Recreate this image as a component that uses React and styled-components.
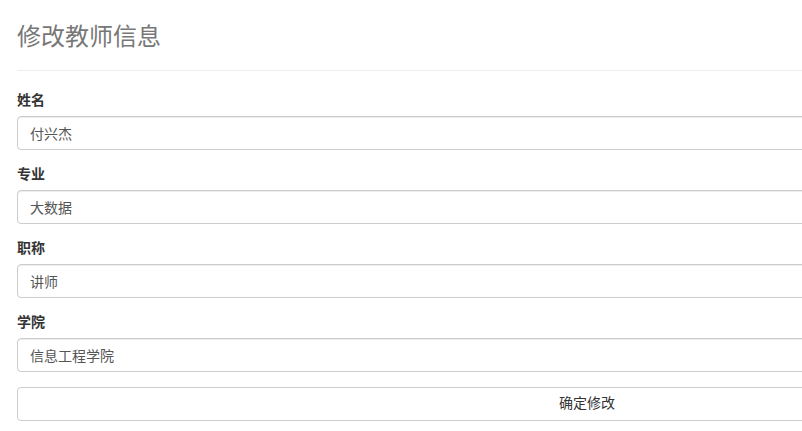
import React from 'react';
import styled, { createGlobalStyle } from 'styled-components';

const GlobalStyle = createGlobalStyle`
    html, body {
        margin: 0;
        padding: 0;
        overflow: hidden;
        background: #fff;
    }
    body {
        font-family: "Liberation Sans", "Noto Sans CJK SC", sans-serif;
        font-size: 14px;
        line-height: 1.42857;
        color: #333;
    }
`;

const Container = styled.div`
    width: 1140px;
    padding: 0 17px;
`;

const PageHeader = styled.div`
    padding: 24px 0 20px;
    margin-bottom: 20px;
    border-bottom: 1px solid #eee;

    h3 {
        margin: 0;
        font-size: 24px;
        font-weight: 400;
        line-height: 1.1;
        color: #777;
    }
`;

const FormGroup = styled.div`
    margin-bottom: 15px;
`;

const Label = styled.label`
    display: block;
    margin-bottom: 5px;
    font-weight: 700;
    color: #333;
`;

const Input = styled.input`
    display: block;
    box-sizing: border-box;
    width: 100%;
    height: 34px;
    padding: 6px 12px;
    font-family: inherit;
    font-size: 14px;
    line-height: 1.42857;
    color: #555;
    background: #fff;
    border: 1px solid #ccc;
    border-radius: 4px;
    box-shadow: inset 0 1px 1px rgba(0, 0, 0, 0.075);
    outline: none;
`;

const SubmitButton = styled.button`
    display: block;
    box-sizing: border-box;
    width: 100%;
    height: 34px;
    padding: 6px 12px;
    font-family: inherit;
    font-size: 14px;
    line-height: 1.42857;
    color: #333;
    background: #fff;
    border: 1px solid #ccc;
    border-radius: 4px;
    cursor: pointer;
`;

const fields = [
    { label: '姓名', value: '付兴杰' },
    { label: '专业', value: '大数据' },
    { label: '职称', value: '讲师' },
    { label: '学院', value: '信息工程学院' },
];

export default function App() {
    return (
        <>
            <GlobalStyle />
            <Container>
                <PageHeader>
                    <h3>修改教师信息</h3>
                </PageHeader>
                <form onSubmit={e => e.preventDefault()}>
                    {fields.map(f => (
                        <FormGroup key={f.label}>
                            <Label>{f.label}</Label>
                            <Input type="text" defaultValue={f.value} />
                        </FormGroup>
                    ))}
                    <SubmitButton type="submit">确定修改</SubmitButton>
                </form>
            </Container>
        </>
    );
}
